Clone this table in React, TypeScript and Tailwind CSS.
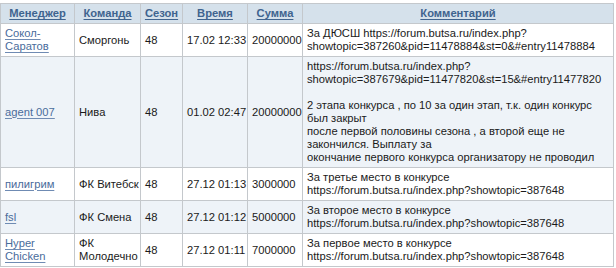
const rows = [
  {
    manager: ['Сокол-', 'Саратов'],
    team: ['Сморгонь'],
    season: '48',
    time: '17.02 12:33',
    sum: '20000000',
    comment: ['За ДЮСШ https://forum.butsa.ru/index.php?', 'showtopic=387260&pid=11478884&st=0&#entry11478884'],
  },
  {
    manager: ['agent 007'],
    team: ['Нива'],
    season: '48',
    time: '01.02 02:47',
    sum: '20000000',
    comment: [
      'https://forum.butsa.ru/index.php?',
      'showtopic=387679&pid=11477820&st=15&#entry11477820',
      '',
      '2 этапа конкурса , по 10 за один этап, т.к. один конкурс',
      'был закрыт',
      'после первой половины сезона , а второй еще не',
      'закончился. Выплату за',
      'окончание первого конкурса организатору не проводил',
    ],
  },
  {
    manager: ['пилигрим'],
    team: ['ФК Витебск'],
    season: '48',
    time: '27.12 01:13',
    sum: '3000000',
    comment: ['За третье место в конкурсе', 'https://forum.butsa.ru/index.php?showtopic=387648'],
  },
  {
    manager: ['fsl'],
    team: ['ФК Смена'],
    season: '48',
    time: '27.12 01:12',
    sum: '5000000',
    comment: ['За второе место в конкурсе', 'https://forum.butsa.ru/index.php?showtopic=387648'],
  },
  {
    manager: ['Hyper', 'Chicken'],
    team: ['ФК', 'Молодечно'],
    season: '48',
    time: '27.12 01:11',
    sum: '7000000',
    comment: ['За первое место в конкурсе', 'https://forum.butsa.ru/index.php?showtopic=387648'],
  },
]

const headers = ['Менеджер', 'Команда', 'Сезон', 'Время', 'Сумма', 'Комментарий']

function Lines({ lines }: { lines: string[] }) {
  return (
    <>
      {lines.map((l, i) => (
        <span key={i}>
          {i > 0 && <br />}
          {l === '' ? '\u00a0' : l}
        </span>
      ))}
    </>
  )
}

export default function App() {
  const td = 'border border-[#c4c8cc] px-[4px] py-[3px] align-middle text-left whitespace-nowrap'
  return (
    <div className="w-[616px] h-[268px] bg-white pt-[3px] overflow-hidden font-['Liberation_Sans',Arial,sans-serif] text-[11.2px] leading-[13px] text-[#1a1a1a]">
      <table className="table-fixed border-collapse w-[613px]">
        <colgroup>
          <col className="w-[74px]" />
          <col className="w-[66px]" />
          <col className="w-[42px]" />
          <col className="w-[65px]" />
          <col className="w-[55px]" />
          <col className="w-[311px]" />
        </colgroup>
        <thead>
          <tr className="bg-[#d5e1eb] h-[20px]">
            {headers.map((h) => (
              <th key={h} className="border border-[#c4c8cc] px-[2px] py-0 text-center font-bold text-[11.2px] text-[#40648f] underline underline-offset-2">
                {h}
              </th>
            ))}
          </tr>
        </thead>
        <tbody>
          {rows.map((r, i) => (
            <tr key={i} className={i % 2 === 1 ? 'bg-[#eef3f8]' : 'bg-white'}>
              <td className={td}>
                <a href="#" className="text-[#4a6c9b] underline underline-offset-2 decoration-[#6f8bb3]">
                  <Lines lines={r.manager} />
                </a>
              </td>
              <td className={td}>
                <Lines lines={r.team} />
              </td>
              <td className={td}>{r.season}</td>
              <td className={td}>{r.time}</td>
              <td className={td}>{r.sum}</td>
              <td className={td}>
                <Lines lines={r.comment} />
              </td>
            </tr>
          ))}
        </tbody>
      </table>
    </div>
  )
}
